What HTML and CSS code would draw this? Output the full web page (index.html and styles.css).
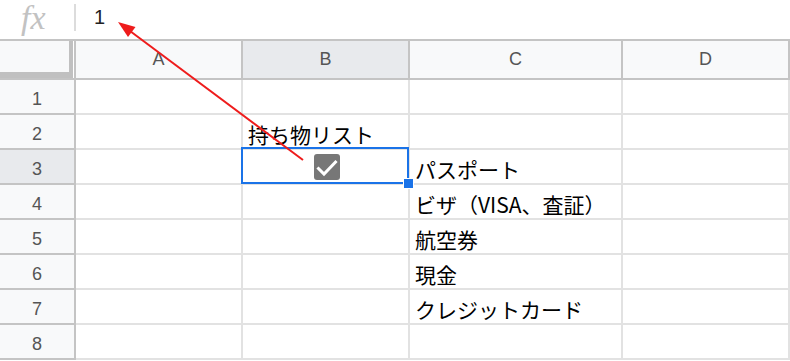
FILE: index.html
```html
<!DOCTYPE html>
<html lang="ja">
  <head>
    <meta charset="UTF-8" />
    <meta name="viewport" content="width=device-width, initial-scale=1.0" />
    <title>持ち物リスト</title>
    <link rel="stylesheet" href="styles.css">
  </head>
  <body>
    <div class="formula-bar">
      <span class="fx">fx</span>
      <span class="formula-divider"></span>
      <span class="formula-value">1</span>
    </div>

    <div class="sheet">
      <div class="corner"></div>
      <div class="col-head">A</div>
      <div class="col-head is-active">B</div>
      <div class="col-head">C</div>
      <div class="col-head">D</div>

      <div class="row-head">1</div>
      <div class="cell"></div>
      <div class="cell"></div>
      <div class="cell"></div>
      <div class="cell"></div>

      <div class="row-head">2</div>
      <div class="cell"></div>
      <div class="cell">持ち物リスト</div>
      <div class="cell"></div>
      <div class="cell"></div>

      <div class="row-head is-active">3</div>
      <div class="cell"></div>
      <div class="cell cell-check">
        <span class="checkbox">
          <svg width="26" height="26" viewBox="0 0 26 26">
            <path d="M4.5 14.5 L10 20 L21.5 8" fill="none" stroke="#fff" stroke-width="3" stroke-linecap="square" />
          </svg>
        </span>
        <span class="selection"></span>
        <span class="fill-handle"></span>
      </div>
      <div class="cell">パスポート</div>
      <div class="cell"></div>

      <div class="row-head">4</div>
      <div class="cell"></div>
      <div class="cell"></div>
      <div class="cell">ビザ（VISA、査証）</div>
      <div class="cell"></div>

      <div class="row-head">5</div>
      <div class="cell"></div>
      <div class="cell"></div>
      <div class="cell">航空券</div>
      <div class="cell"></div>

      <div class="row-head">6</div>
      <div class="cell"></div>
      <div class="cell"></div>
      <div class="cell">現金</div>
      <div class="cell"></div>

      <div class="row-head">7</div>
      <div class="cell"></div>
      <div class="cell"></div>
      <div class="cell">クレジットカード</div>
      <div class="cell"></div>

      <div class="row-head">8</div>
      <div class="cell"></div>
      <div class="cell"></div>
      <div class="cell"></div>
      <div class="cell"></div>
    </div>

    <svg class="callout" width="790" height="361" viewBox="0 0 790 361">
      <line x1="303" y1="160" x2="130" y2="31" stroke="#ee1c1c" stroke-width="2" />
      <polygon points="118,22 128,37 135.5,27" fill="#ee1c1c" />
    </svg>
  </body>
</html>
```

FILE: styles.css
```css
*,
*::before,
*::after {
  box-sizing: border-box;
}

body {
  margin: 0;
  position: relative;
  height: 361px;
  overflow: hidden;
  background: #fff;
  font-family: "Noto Sans CJK JP", "Noto Sans", sans-serif;
  color: #000;
}

/* formula bar */

.formula-bar {
  display: flex;
  align-items: center;
  height: 41px;
  border-bottom: 2px solid #c4c4c4;
}

.fx {
  width: 74px;
  padding-left: 21px;
  font-family: "Liberation Serif", serif;
  font-style: italic;
  font-size: 34px;
  line-height: 39px;
  color: #c2c2c2;
  margin-bottom: 5px;
}

.formula-divider {
  width: 2px;
  height: 27px;
  margin-bottom: 4px;
  background: #dcdcdc;
}

.formula-value {
  margin-left: 18px;
  margin-bottom: 4px;
  font-family: "Liberation Sans", Arial, sans-serif;
  font-size: 20px;
  color: #222;
}

/* grid */

.sheet {
  display: grid;
  grid-template-columns: 76px 167px 167px 213px 167px;
  grid-template-rows: 39px repeat(8, 35px);
}

.corner,
.col-head,
.row-head {
  background: #f8f9fa;
  border-right: 2px solid #c4c4c4;
  border-bottom: 2px solid #c4c4c4;
  font-family: "Liberation Sans", Arial, sans-serif;
  font-size: 18px;
  color: #555;
}

.corner {
  box-shadow: inset -1px 0 0 #fff, inset -5px -6px 0 #c0c0c0;
}

.col-head {
  display: flex;
  align-items: center;
  justify-content: center;
}

.row-head {
  display: flex;
  align-items: center;
  justify-content: center;
  padding-top: 5px;
}

.col-head.is-active,
.row-head.is-active {
  background: #e8eaed;
}

.cell {
  display: flex;
  align-items: flex-end;
  padding: 0 0 3px 5px;
  border-right: 2px solid #e2e2e2;
  border-bottom: 2px solid #e2e2e2;
  font-size: 21px;
  line-height: 21px;
  white-space: nowrap;
}

.cell-check {
  position: relative;
  align-items: center;
  justify-content: center;
  padding: 0 0 0 2px;
}

.checkbox {
  display: block;
  width: 26px;
  height: 26px;
  border-radius: 3px;
  background: #777;
}

.checkbox svg {
  display: block;
}

.selection {
  position: absolute;
  left: -2px;
  top: -3px;
  width: 168px;
  height: 37px;
  border: 2px solid #1a73e8;
}

.fill-handle {
  position: absolute;
  left: 161px;
  top: 29px;
  width: 9px;
  height: 9px;
  background: #1a73e8;
  outline: 1px solid #fff;
}

.callout {
  position: absolute;
  left: 0;
  top: 0;
  pointer-events: none;
}
```
